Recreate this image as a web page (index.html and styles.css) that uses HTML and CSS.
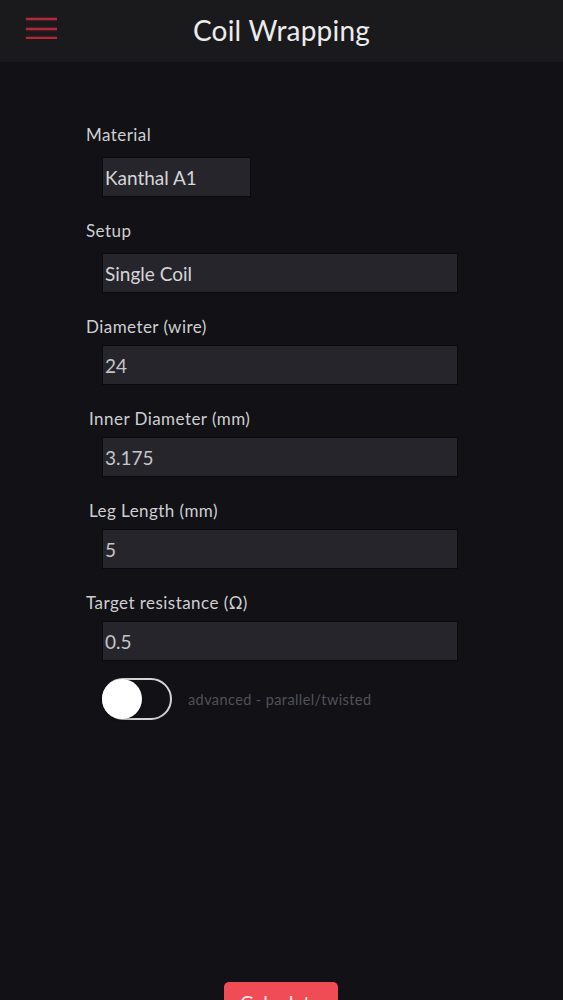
FILE: index.html
```html
<!DOCTYPE html>
<html lang="en">
<head>
<meta charset="utf-8">
<title>Coil Wrapping</title>
<link rel="stylesheet" href="styles.css">
</head>
<body>
<header class="topbar">
  <button class="menu-btn" aria-label="Menu">
    <svg width="32" height="22" viewBox="0 0 32 22">
      <line x1="1" y1="2" x2="32" y2="2"/>
      <line x1="1" y1="12" x2="32" y2="12"/>
      <line x1="1" y1="21" x2="32" y2="21"/>
    </svg>
  </button>
  <h1 class="title">Coil Wrapping</h1>
  <span class="spacer"></span>
</header>
<main class="form">
  <div class="field field--loose">
    <label class="label">Material</label>
    <input class="box box--short" value="Kanthal A1" readonly>
  </div>
  <div class="field field--loose">
    <label class="label">Setup</label>
    <input class="box" value="Single Coil" readonly>
  </div>
  <div class="field">
    <label class="label">Diameter (wire)</label>
    <input class="box box--num" value="24">
  </div>
  <div class="field">
    <label class="label label--indent">Inner Diameter (mm)</label>
    <input class="box box--num" value="3.175">
  </div>
  <div class="field">
    <label class="label label--indent">Leg Length (mm)</label>
    <input class="box box--num" value="5">
  </div>
  <div class="field">
    <label class="label">Target resistance (Ω)</label>
    <input class="box box--num" value="0.5">
  </div>
  <div class="toggle-row">
    <span class="toggle"><span class="knob"></span></span>
    <span class="toggle-text">advanced - parallel/twisted</span>
  </div>
  <div class="actions">
    <button class="calc">Calculate</button>
  </div>
</main>
</body>
</html>
```
FILE: styles.css
```css
* { box-sizing: border-box; }
html, body {
  margin: 0;
  padding: 0;
  background: #111116;
  font-family: "Lato", "Open Sans", sans-serif;
  color: #d2d2d4;
}
.topbar {
  height: 62px;
  background: #1a1a1c;
  display: grid;
  grid-template-columns: 1fr auto 1fr;
  align-items: center;
}
.menu-btn {
  justify-self: start;
  margin-left: 25px;
  margin-top: -6px;
  padding: 0;
  border: 0;
  background: none;
  display: flex;
}
.menu-btn svg line {
  stroke: #b02a3d;
  stroke-width: 2.2;
  filter: drop-shadow(0 0 1px #7a1a28);
}
.title {
  margin: 0;
  font-size: 28px;
  font-weight: 400;
  color: #ececec;
  letter-spacing: 0.2px;
  padding-bottom: 2px;
}
.form {
  padding: 63px 0 0 86px;
  display: flex;
  flex-direction: column;
}
.field {
  display: flex;
  flex-direction: column;
  align-items: flex-start;
  margin-bottom: 24px;
}
.label {
  font-size: 17px;
  line-height: 20px;
  color: #cfcfd1;
  letter-spacing: 0.45px;
  margin-bottom: 8px;
}
.field--loose .label { margin-bottom: 12px; }
.label--indent { padding-left: 3px; }
.box {
  margin-left: 16px;
  width: 356px;
  height: 40px;
  background: #25252b;
  border: 1.5px solid #0a0a0d;
  color: #d6d6d8;
  font-family: "Lato", "Open Sans", sans-serif;
  font-size: 19px;
  padding: 0 0 0 2px;
  outline: none;
}
.box--short { width: 149px; }
.box--num { color: #c6c6c8; }
.toggle-row {
  margin-top: -7px;
  margin-left: 16px;
  display: flex;
  align-items: center;
  gap: 16px;
}
.toggle {
  width: 70px;
  height: 42px;
  border: 2px solid #d4d4d6;
  border-radius: 21px;
  background: #111116;
  display: flex;
  align-items: center;
}
.knob {
  width: 40px;
  height: 40px;
  margin-left: -2px;
  border-radius: 50%;
  background: #ffffff;
  box-shadow: 0 1px 3px rgba(0,0,0,0.4);
}
.toggle-text {
  font-size: 14.5px;
  color: #515157;
  letter-spacing: 0.4px;
}
.actions {
  margin-top: 262px;
  margin-left: -86px;
  display: flex;
  justify-content: center;
}
.calc {
  width: 114px;
  height: 44px;
  border: 0;
  border-radius: 5px;
  background: #f04c55;
  color: #ffe8e8;
  font-family: "Lato", "Open Sans", sans-serif;
  font-size: 20px;
  padding: 0 0 4px;
  margin-left: -2px;
}
```
